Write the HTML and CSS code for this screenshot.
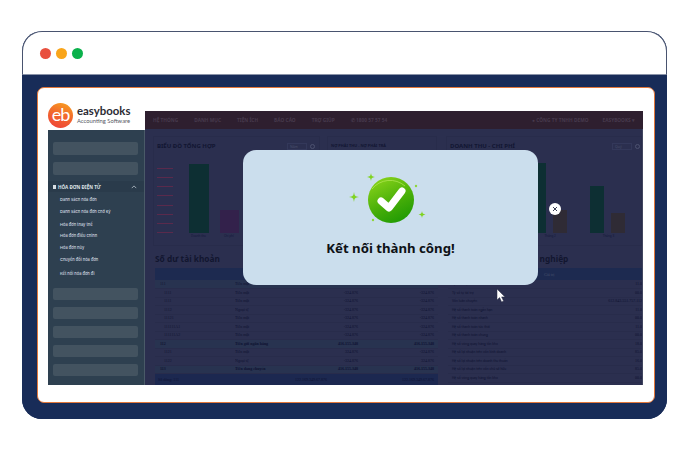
FILE: index.html
```html
<!DOCTYPE html>
<html lang="en">
<head>
    <meta charset="UTF-8">
    <meta name="viewport" content="width=device-width, initial-scale=1.0">
    <title>Easybooks</title>
    <link rel="stylesheet" href="styles.css">
</head>
<body>
    <div class="window">
        <div class="window-head">
            <span class="dot dot-red"></span>
            <span class="dot dot-yellow"></span>
            <span class="dot dot-green"></span>
        </div>
        <div class="window-body">
            <div class="card">
                <div class="side-col">
                    <div class="logo">
                        <div class="logo-mark">eb</div>
                        <div class="logo-text">
                            <div class="logo-name">easybooks</div>
                            <div class="logo-sub">Accounting Software</div>
                        </div>
                    </div>
                    <div class="sidebar">
                        <div class="side-item"></div>
                        <div class="side-item"></div>
                        <div class="side-active">
                            <span class="side-icon"></span>
                            <span class="side-label">HÓA ĐƠN ĐIỆN TỬ</span>
                            <svg class="side-chevron" viewBox="0 0 8 5"><path d="M1 4 4 1l3 3" fill="none" stroke="#c3ccd4" stroke-width="1"/></svg>
                        </div>
                        <ul class="side-menu">
                            <li>Danh sách hóa đơn</li>
                            <li>Danh sách hóa đơn chờ ký</li>
                            <li>Hóa đơn thay thế</li>
                            <li>Hóa đơn điều chỉnh</li>
                            <li>Hóa đơn hủy</li>
                            <li>Chuyển đổi hóa đơn</li>
                            <li>Kết nối hóa đơn đi</li>
                        </ul>
                        <div class="side-item side-item-low"></div>
                        <div class="side-item side-item-low"></div>
                        <div class="side-item side-item-low"></div>
                        <div class="side-item side-item-low"></div>
                        <div class="side-item side-item-low"></div>
                    </div>
                </div>
                <div class="main">
                    <div class="topbar">
                        <span>HỆ THỐNG</span>
                        <span>DANH MỤC</span>
                        <span>TIỆN ÍCH</span>
                        <span>BÁO CÁO</span>
                        <span>TRỢ GIÚP</span>
                        <span>✆ 1800 57 57 54</span>
                        <span class="topbar-company">● CÔNG TY TNHH DEMO</span>
                        <span>EASYBOOKS ▾</span>
                    </div>
                    <div class="content">
                        <div class="charts">
                            <div class="panel panel-left">
                                <div class="panel-head">
                                    <h3>BIỂU ĐỒ TỔNG HỢP</h3>
                                    <span class="panel-select">Năm</span>
                                    <span class="panel-gear"></span>
                                </div>
                                <div class="plot">
                                    <div class="ticks">
                                        <i></i><i></i><i></i><i></i><i></i><i></i><i></i><i></i>
                                    </div>
                                    <div class="bar bar-green bar-a"></div>
                                    <div class="bar bar-purple bar-b"></div>
                                </div>
                                <div class="plot-labels">
                                    <span>Doanh thu</span>
                                    <span>Chi phí</span>
                                </div>
                            </div>
                            <div class="panel panel-mid">
                                <h3>NỢ PHẢI THU - NỢ PHẢI TRẢ</h3>
                            </div>
                            <div class="panel panel-right">
                                <div class="panel-head">
                                    <h3>DOANH THU - CHI PHÍ</h3>
                                    <span class="panel-select">Quý</span>
                                    <span class="panel-gear"></span>
                                </div>
                                <div class="plot plot-months">
                                    <div class="month">
                                        <div class="bar bar-green bar-m1"></div>
                                        <div class="bar bar-grey bar-m2"></div>
                                    </div>
                                    <div class="month">
                                        <div class="bar bar-green bar-m3"></div>
                                        <div class="bar bar-grey bar-m4"></div>
                                    </div>
                                    <div class="month">
                                        <div class="bar bar-green bar-m5"></div>
                                        <div class="bar bar-grey bar-m6"></div>
                                    </div>
                                </div>
                                <div class="plot-labels plot-labels-months">
                                    <span>Tháng 1</span>
                                    <span>Tháng 2</span>
                                    <span>Tháng 3</span>
                                </div>
                            </div>
                        </div>
                        <div class="tables">
                            <div class="table-wrap table-left">
                                <h2>Số dư tài khoản</h2>
                                <table class="balance">
                                    <colgroup><col class="col-code"><col class="col-name"><col class="col-open"><col class="col-close"></colgroup>
                                    <thead><tr><th colspan="4"></th></tr></thead>
                                    <tbody>
                                        <tr class="group"><td class="code">111</td><td>Tiền mặt</td><td>-324.876</td><td>-324.876</td></tr>
                                        <tr><td class="code sub">1111</td><td>Tiền mặt</td><td>-324.876</td><td>-324.876</td></tr>
                                        <tr><td class="code sub">1111</td><td>Tiền mặt</td><td>-324.876</td><td>-324.876</td></tr>
                                        <tr><td class="code sub">1112</td><td>Ngoại tệ</td><td>-324.876</td><td>-324.876</td></tr>
                                        <tr><td class="code sub">11121</td><td>Tiền mặt</td><td>-324.876</td><td>-324.876</td></tr>
                                        <tr><td class="code sub">111111A1</td><td>Tiền mặt</td><td>-324.876</td><td>-324.876</td></tr>
                                        <tr><td class="code sub">111111A2</td><td>Tiền mặt</td><td>-324.876</td><td>-324.876</td></tr>
                                        <tr class="group strong"><td class="code">112</td><td>Tiền gửi ngân hàng</td><td>416.155.348</td><td>416.155.348</td></tr>
                                        <tr><td class="code sub">1121</td><td>Tiền mặt</td><td>324.876</td><td>-324.876</td></tr>
                                        <tr><td class="code sub">1122</td><td>Ngoại tệ</td><td>-324.876</td><td>324.876</td></tr>
                                        <tr class="group strong"><td class="code">113</td><td>Tiền đang chuyển</td><td>416.155.348</td><td>416.155.348</td></tr>
                                    </tbody>
                                    <tfoot><tr><td colspan="2">Số dòng: 111</td><td>122.169.349.67.876</td><td>122.169.349.67.876</td></tr></tfoot>
                                </table>
                            </div>
                            <div class="table-wrap table-right">
                                <h2>Hệ số tài chính doanh nghiệp</h2>
                                <table class="ratios">
                                    <colgroup><col class="col-label"><col></colgroup>
                                    <thead><tr><th></th><th>Giá trị</th></tr></thead>
                                    <tbody>
                                        <tr><td>Tỷ suất nợ</td><td>11.0</td></tr>
                                        <tr><td>Tỷ số tự tài trợ</td><td>00.0</td></tr>
                                        <tr><td>Vốn luân chuyển</td><td>612.843.551.757.112</td></tr>
                                        <tr><td>Hệ số thanh toán ngắn hạn</td><td>11.0</td></tr>
                                        <tr><td>Hệ số thanh toán nhanh</td><td>00.0</td></tr>
                                        <tr><td>Hệ số thanh toán tức thời</td><td>11.0</td></tr>
                                        <tr><td>Hệ số thanh toán chung</td><td>00.0</td></tr>
                                        <tr><td>Hệ số vòng quay hàng tồn kho</td><td>18.0</td></tr>
                                        <tr><td>Hệ số lợi nhuận trên vốn kinh doanh</td><td>85.0</td></tr>
                                        <tr><td>Hệ số lợi nhuận trên doanh thu thuần</td><td>16.0</td></tr>
                                        <tr><td>Hệ số lợi nhuận trên vốn chủ sở hữu</td><td>85.0</td></tr>
                                        <tr><td>Hệ số vòng quay hàng tồn kho</td><td>00.0</td></tr>
                                    </tbody>
                                </table>
                            </div>
                        </div>
                    </div>

                    <div class="modal">
                        <svg class="modal-icon" viewBox="0 0 100 60">
                            <defs>
                                <linearGradient id="okFill" x1="0.2" y1="0" x2="0.7" y2="1">
                                    <stop offset="0" stop-color="#8ad41a"/>
                                    <stop offset="0.6" stop-color="#45ad08"/>
                                    <stop offset="1" stop-color="#1f9a04"/>
                                </linearGradient>
                            </defs>
                            <path d="M26 0c.5 3 1 3.500 4 4-3 .5-3.500 1-4 4-.5-3-1-3.500-4-4 3-.5 3.500-1 4-4z" fill="#7fd321"/>
                            <path d="M9 19c.6 4 1.200 4.500 5 5-3.800.5-4.400 1-5 5-.6-4-1.200-4.500-5-5 3.800-.5 4.400-1 5-5z" fill="#7fd321"/>
                            <path d="M77 38c.4 2.500.9 3 3.500 3.500-2.600.5-3.100 1-3.500 3.500-.4-2.500-.9-3-3.500-3.500 2.600-.5 3.100-1 3.500-3.500z" fill="#7fd321"/>
                            <circle cx="71" cy="13" r="1.200" fill="#8fd63a"/>
                            <circle cx="28" cy="47" r="1.200" fill="#8fd63a"/>
                            <circle cx="46" cy="27" r="23" fill="url(#okFill)"/>
                            <path d="M27 16a23 23 0 0 1 33-3" fill="none" stroke="#b5e85a" stroke-width="1" opacity="0.7"/>
                            <path d="M36 28 44 35 57 18" fill="none" stroke="#fff" stroke-width="7" stroke-linecap="round" stroke-linejoin="round"/>
                        </svg>
                        <div class="modal-title">Kết nối thành công!</div>
                    </div>
                    <div class="modal-close">
                        <svg viewBox="0 0 6 6"><path d="M1 1l4 4M5 1 1 5" stroke="#3a4055" stroke-width="1"/></svg>
                    </div>
                    <svg class="cursor" viewBox="0 0 11 15"><path d="M1 1v11l2.600-2.400 2 4.400 2-.9-2-4.200H9z" fill="#fff" stroke="#2a2f45" stroke-width="0.5"/></svg>
                </div>
            </div>
        </div>
    </div>
</body>
</html>
```

FILE: styles.css
```css
html, body {
    margin: 0;
    padding: 0;
    background-color: #ffffff;
}
body {
    padding: 31px 22px 0;
    font-family: "Noto Sans", Arial, sans-serif;
    overflow: hidden;
}
h2, h3, ul {
    margin: 0;
    padding: 0;
}
.window {
    width: 645px;
    height: 388px;
    display: flex;
    flex-direction: column;
    box-sizing: border-box;
    border-radius: 20px;
    overflow: hidden;
    background-color: #182c58;
}
.window-head {
    height: 44px;
    flex: none;
    display: flex;
    align-items: center;
    gap: 5px;
    padding: 0 0 0 17px;
    box-sizing: border-box;
    background-color: #ffffff;
    border: 1px solid #49536f;
    border-bottom: 1px solid #8a93a8;
    border-radius: 20px 20px 0 0;
}
.dot {
    width: 11px;
    height: 11px;
    border-radius: 50%;
}
.dot-red {
    background-color: #e8503f;
}
.dot-yellow {
    background-color: #f9a51a;
}
.dot-green {
    background-color: #0ab14b;
}
.window-body {
    flex: 1;
    min-height: 0;
    padding: 12px 12px 16px 15px;
    background-color: #182c58;
    display: flex;
}
.card {
    flex: 1;
    min-height: 0;
    display: flex;
    box-sizing: border-box;
    padding: 12px 11px 17px 10px;
    background-color: #ffffff;
    border: 1px solid #e2773a;
    border-radius: 7px;
}

/* left column */
.side-col {
    width: 97px;
    flex: none;
    display: flex;
    flex-direction: column;
}
.logo {
    height: 30px;
    flex: none;
    display: flex;
    align-items: center;
    gap: 4px;
}
.logo-mark {
    width: 25px;
    height: 25px;
    border-radius: 50%;
    background: linear-gradient(20deg, #ee3f3a 0%, #f26a2c 55%, #f9a61f 100%);
    color: #ffffff;
    font-family: Lato, sans-serif;
    font-size: 18px;
    font-weight: 400;
    line-height: 22px;
    letter-spacing: -1px;
    text-align: center;
}
.logo-name {
    font-family: Lato, sans-serif;
    font-size: 11.400px;
    font-weight: 700;
    line-height: 12px;
    color: #2b2b33;
}
.logo-sub {
    font-family: Lato, sans-serif;
    font-size: 5.800px;
    line-height: 8px;
    color: #55585f;
}
.sidebar {
    flex: 1;
    min-height: 0;
    box-sizing: border-box;
    padding: 12px 6px 0 5px;
    background-color: #2e4050;
    border-right: 1px solid #4a5a68;
}
.side-item {
    height: 13px;
    margin-bottom: 7px;
    background-color: #435360;
    border-radius: 2px;
}
.side-item-low {
    height: 12px;
    margin-bottom: 7px;
}
.side-active {
    height: 11px;
    margin: -1px -6px 3px -5px;
    padding: 0 7px 0 5px;
    display: flex;
    align-items: center;
    gap: 2px;
    background-color: #2a3b4b;
}
.side-icon {
    width: 3px;
    height: 4px;
    background-color: #d8dee3;
}
.side-label {
    flex: 1;
    font-size: 4.600px;
    font-weight: 700;
    color: #dfe4e8;
}
.side-chevron {
    width: 6px;
    height: 4px;
}
.side-menu {
    list-style: none;
    height: 93px;
    padding-left: 7px;
    font-family: Inter, sans-serif;
    font-size: 4px;
    font-weight: 500;
    color: #d3dae0;
}
.side-menu li {
    height: 10px;
    line-height: 10px;
    margin-bottom: 1.500px;
}
.side-menu li:nth-child(2) {
    margin-bottom: 3px;
}
.side-menu li:nth-child(5) {
    margin-bottom: 2.500px;
}
.side-menu li:nth-child(6) {
    margin-bottom: 4px;
}

/* main column */
.main {
    flex: 1;
    margin-top: 11px;
    position: relative;
    display: flex;
    flex-direction: column;
    min-width: 0;
    min-height: 0;
}
.topbar {
    height: 18px;
    flex: none;
    display: flex;
    align-items: center;
    gap: 16px;
    padding: 0 8px;
    background-color: #2e1f2f;
    font-size: 4.800px;
    font-weight: 700;
    color: #473a4d;
    white-space: nowrap;
}
.topbar-company {
    margin-left: auto;
    margin-right: -2px;
}
.content {
    flex: 1;
    min-height: 0;
    display: flex;
    flex-direction: column;
    padding: 7px 0 0 8px;
    background-color: #2b2f4f;
    border-right: 1px solid #41465f;
    overflow: hidden;
}
.charts {
    height: 110px;
    flex: none;
    display: flex;
    gap: 7px;
}
.panel {
    box-sizing: border-box;
    padding-top: 5px;
    border: 1px solid #282c4b;
}
.panel h3 {
    font-size: 6px;
    font-weight: 700;
    line-height: 8px;
    color: #121632;
    white-space: nowrap;
}
.panel-left {
    width: 167px;
    padding-left: 3px;
    padding-right: 3px;
}
.panel-mid {
    width: 110px;
    padding-left: 3px;
}
.panel-mid h3 {
    font-size: 3.900px;
}
.panel-right {
    flex: 1;
    margin-left: 2px;
    padding-left: 3px;
}
.panel-head {
    display: flex;
    align-items: center;
    gap: 3px;
    height: 8px;
}
.panel-head h3 {
    flex: 1;
}
.panel-select {
    width: 20px;
    height: 7px;
    box-sizing: border-box;
    padding-left: 2px;
    border: 1px solid #33385a;
    font-size: 3.500px;
    line-height: 5px;
    color: #4a4f6d;
}
.panel-gear {
    width: 5px;
    height: 5px;
    box-sizing: border-box;
    margin-right: 1px;
    border: 1px solid #4d5270;
    border-radius: 50%;
}
.plot {
    height: 69px;
    margin-top: 14px;
    display: flex;
    align-items: flex-end;
}
.ticks {
    width: 16px;
    height: 65px;
    margin-right: 16px;
    display: flex;
    flex-direction: column;
    justify-content: space-between;
}
.ticks i {
    display: block;
    height: 1px;
    background-color: #5a2a4c;
}
.bar {
    flex: none;
}
.bar-green {
    background-color: #0d2f33;
}
.bar-purple {
    background-color: #33214b;
}
.bar-grey {
    background-color: #2f2b35;
}
.bar-a {
    width: 20px;
    height: 69px;
    margin-right: 11px;
}
.bar-b {
    width: 19px;
    height: 23px;
}
.plot-labels {
    display: flex;
    gap: 18px;
    padding: 1px 0 0 34px;
    font-size: 3px;
    line-height: 5px;
    color: #14183a;
}
.plot-months {
    padding-left: 24px;
    gap: 23px;
}
.month {
    display: flex;
    align-items: flex-end;
    gap: 7px;
}
.month .bar {
    width: 14px;
}
.bar-m1 {
    height: 40px;
}
.bar-m2 {
    height: 20px;
}
.bar-m3 {
    height: 70px;
}
.bar-m4 {
    height: 23px;
}
.bar-m5 {
    height: 47px;
}
.bar-m6 {
    height: 20px;
}
.plot-labels-months {
    gap: 47px;
    padding-left: 36px;
}

/* tables */
.tables {
    flex: 1;
    min-height: 0;
    display: flex;
    gap: 10px;
    padding-top: 7px;
}
.table-wrap h2 {
    height: 15px;
    font-size: 8.300px;
    font-weight: 700;
    line-height: 12px;
    color: #12162f;
    white-space: nowrap;
}
.table-left {
    width: 283px;
    flex: none;
    margin-left: 2px;
}
.table-right {
    flex: 1;
    min-width: 0;
}
table {
    width: 100%;
    border-collapse: collapse;
    table-layout: fixed;
    font-family: "Liberation Serif", serif;
    font-size: 4px;
    color: #0e1230;
}
.col-code {
    width: 80px;
}
.col-name {
    width: 60px;
}
.col-open {
    width: 67px;
}
.col-close {
    width: 76px;
}
.col-label {
    width: 96px;
}
th {
    height: 12px;
    padding: 0;
    background-color: #1d2a50;
    font-size: 4px;
    font-weight: 400;
    text-align: left;
    color: #47506f;
}
td {
    height: 8.500px;
    padding: 0;
    line-height: 4px;
    box-sizing: border-box;
    border-bottom: 1px solid #282c4b;
    white-space: nowrap;
    overflow: hidden;
}
.balance td:nth-child(3), .balance td:nth-child(4) {
    text-align: right;
    padding-right: 4px;
}
.balance .code {
    padding-left: 5px;
    color: #121632;
}
.balance .sub {
    padding-left: 9px;
}
.group td {
    background-color: #283350;
}
.strong td {
    font-weight: 700;
}
tfoot td {
    height: 12px;
    background-color: #1c2850;
    border: 0;
}
tfoot td:first-child {
    padding-left: 3px;
}
.ratios td:nth-child(1) {
    font-family: Inter, sans-serif;
    font-size: 3.200px;
    padding-left: 4px;
}
.ratios td:nth-child(2) {
    text-align: right;
}

/* things on top of the dashboard */
.modal {
    position: absolute;
    left: 98px;
    top: 39px;
    width: 295px;
    height: 135px;
    box-sizing: border-box;
    padding-top: 23px;
    background-color: #cbdeed;
    border-radius: 13px;
    text-align: center;
}
.modal-icon {
    display: block;
    width: 100px;
    height: 60px;
    margin: 0 0 0 102px;
}
.modal-title {
    margin-top: 5px;
    font-size: 13.200px;
    font-weight: 700;
    line-height: 20px;
    color: #0e1116;
}
.modal-close {
    position: absolute;
    left: 404px;
    top: 92px;
    width: 12px;
    height: 12px;
    padding: 3px;
    box-sizing: border-box;
    border-radius: 50%;
    background-color: #ffffff;
}
.modal-close svg {
    display: block;
}
.cursor {
    position: absolute;
    left: 351px;
    top: 177px;
    width: 11px;
    height: 15px;
}
```
